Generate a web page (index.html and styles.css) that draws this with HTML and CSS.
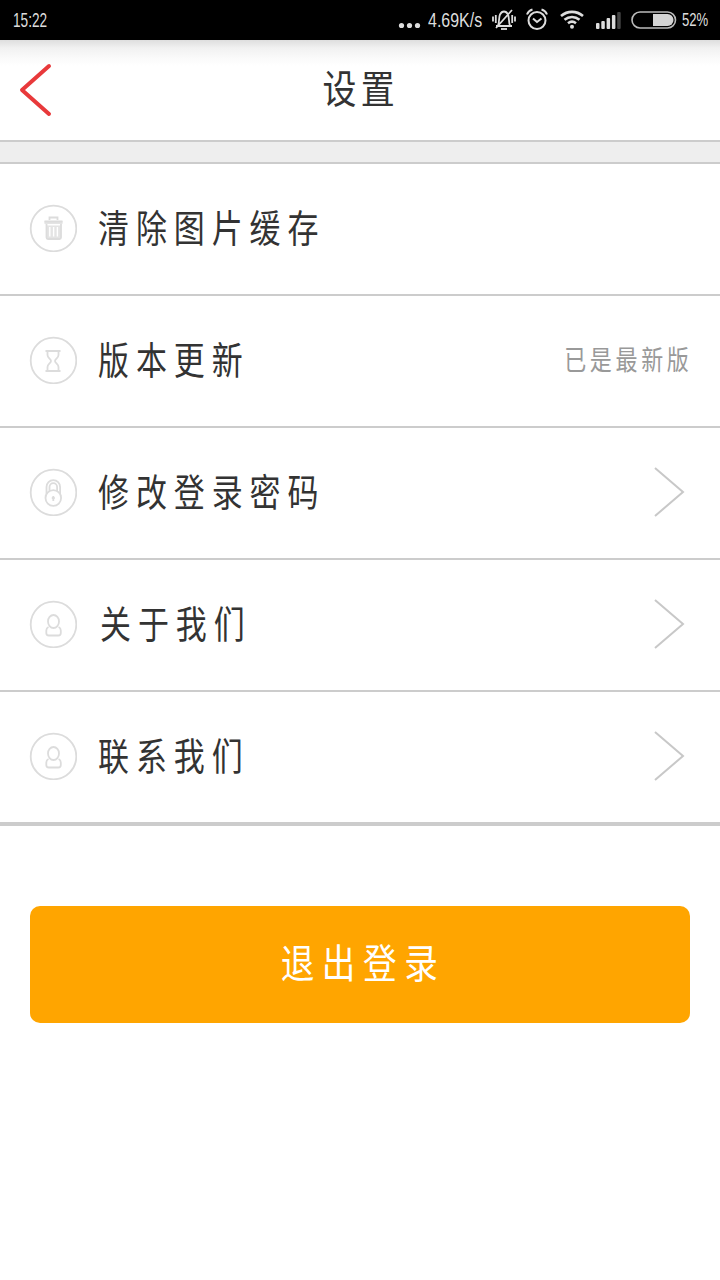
FILE: index.html
```html
<!DOCTYPE html>
<html lang="zh-CN">
<head>
    <meta charset="UTF-8">
    <meta name="viewport" content="width=device-width, initial-scale=1.0">
    <title>设置</title>
    <link rel="stylesheet" href="styles.css">
</head>
<body>
    <div class="statusbar">
        <span class="time"><span class="narrow">15:22</span></span>
        <svg class="dots" width="24" height="40" viewBox="0 0 24 40" fill="#ddd">
            <circle cx="3.5" cy="25.500" r="2.6"/><circle cx="11.5" cy="25.500" r="2.6"/><circle cx="19.5" cy="25.500" r="2.6"/>
        </svg>
        <span class="speed"><span class="narrow">4.69K/s</span></span>
        <svg class="mute" width="24" height="40" viewBox="0 0 24 40" fill="none" stroke="#ddd" stroke-width="1.8">
            <path d="M4 26h16M6 25.500c1.500-2 .5-8 2-11 2-4 6-4 8 0 1.500 3 .5 9 2 11M4 28L20 10M3.800 15v8M1 16.500v5M20.200 15v8M23 16.500v5"/>
            <path d="M9 29h6"/>
        </svg>
        <svg class="alarm" width="24" height="40" viewBox="0 0 24 40" fill="none" stroke="#ddd" stroke-width="2">
            <circle cx="12" cy="20.500" r="8.500"/>
            <path d="M8 18.500l4 3.500 4.500-3.500M2 14.500c1-2.500 3-4.300 5.500-5M22 14.500c-1-2.500-3-4.300-5.500-5"/>
        </svg>
        <svg class="wifi" width="24" height="40" viewBox="0 0 24 40" fill="none" stroke="#ddd" stroke-width="2.600">
            <path d="M1 16c6.500-5.500 15.500-5.500 22 0M4.500 19.800c4.500-3.800 10.500-3.800 15 0M8 23.300c2.500-2 5.500-2 8 0"/>
            <circle cx="12" cy="26.800" r="2" fill="#ddd" stroke="none"/>
        </svg>
        <svg class="signal" width="26" height="40" viewBox="0 0 26 40" fill="#ddd">
            <rect x="0" y="23" width="3.500" height="6" rx="1"/>
            <rect x="5.300" y="21" width="3.500" height="8" rx="1"/>
            <rect x="10.600" y="18" width="3.500" height="11" rx="1"/>
            <rect x="15.900" y="15" width="3.500" height="14" rx="1"/>
            <rect x="21.200" y="12" width="3.500" height="17" rx="1" fill="#444"/>
        </svg>
        <svg class="battery" width="46" height="40" viewBox="0 0 46 40">
            <rect x="1" y="12" width="43.500" height="16" rx="8" fill="none" stroke="#bbb" stroke-width="1.600"/>
            <path d="M22 14h14.500a6 6 0 0 1 0 12H22z" fill="#d4d4d4"/>
        </svg>
        <span class="percent"><span class="narrow">52%</span></span>
    </div>

    <div class="header">
        <svg class="back" width="34" height="54" viewBox="0 0 34 54" fill="none" stroke="#e8393b" stroke-width="4" stroke-linecap="round" stroke-linejoin="round">
            <path d="M30 3L3 27l27 24"/>
        </svg>
        <h1 class="title">设置</h1>
    </div>

    <div class="gap"></div>

    <ul class="list">
        <li class="row">
            <svg class="icon" width="48" height="48" viewBox="0 0 48 48">
                <circle cx="24.500" cy="24.500" r="22.800"/>
                <path class="solid" d="M15.500 17h18v3h-18zM17.500 21.500h14.500V35H17.500z"/>
                <path d="M15.500 17.500h18M20.500 16v-2.500h8V16M17.500 20v13.500q0 1.500 1.500 1.500h11.500q1.500 0 1.500-1.500V20"/>
                <path class="slots" d="M20.800 23v9.500M24.600 23v9.500M28.400 23v9.500"/>
            </svg>
            <span class="label">清除图片缓存</span>
        </li>
        <li class="row">
            <svg class="icon" width="48" height="48" viewBox="0 0 48 48">
                <circle cx="24.500" cy="24.500" r="22.800"/>
                <path d="M16.500 15h15M16.500 35h15M18.500 15v4c0 3 3.500 4 3.500 6s-3.500 3-3.500 6V35M29.500 15v4c0 3-3.500 4-3.500 6s3.500 3 3.500 6V35"/>
            </svg>
            <span class="label">版本更新</span>
            <span class="value">已是最新版</span>
        </li>
        <li class="row">
            <svg class="icon" width="48" height="48" viewBox="0 0 48 48">
                <circle cx="24.500" cy="24.500" r="22.800"/>
                <circle cx="24.300" cy="30" r="7.800"/>
                <path d="M17.500 26v-7a6.800 6.800 0 0 1 13.600 0v7M20.500 23v-4a3.800 3.800 0 0 1 7.600 0v4M24.300 28v5M22.800 30h3"/>
            </svg>
            <span class="label">修改登录密码</span>
            <svg class="arrow" width="32" height="52" viewBox="0 0 32 52"><path d="M2 2l28 24L2 50"/></svg>
        </li>
        <li class="row">
            <svg class="icon" width="48" height="48" viewBox="0 0 48 48">
                <circle cx="24.500" cy="24.500" r="22.800"/>
                <ellipse cx="24.500" cy="21.500" rx="5.500" ry="6.500"/>
                <path d="M19.500 27q-2.200 1-2.200 3.500V33q0 2.500 2.500 2.500h9.500q2.500 0 2.500-2.500v-2.500q0-2.500-2.200-3.500"/>
            </svg>
            <span class="label about">关于我们</span>
            <svg class="arrow" width="32" height="52" viewBox="0 0 32 52"><path d="M2 2l28 24L2 50"/></svg>
        </li>
        <li class="row">
            <svg class="icon" width="48" height="48" viewBox="0 0 48 48">
                <circle cx="24.500" cy="24.500" r="22.800"/>
                <ellipse cx="24.500" cy="21.500" rx="5.500" ry="6.500"/>
                <path d="M19.500 27q-2.200 1-2.200 3.500V33q0 2.500 2.500 2.500h9.500q2.500 0 2.500-2.500v-2.500q0-2.500-2.200-3.500"/>
            </svg>
            <span class="label">联系我们</span>
            <svg class="arrow" width="32" height="52" viewBox="0 0 32 52"><path d="M2 2l28 24L2 50"/></svg>
        </li>
    </ul>

    <button class="logout"><span class="logout-text">退出登录</span></button>
</body>
</html>
```

FILE: styles.css
```css
* {
    box-sizing: border-box;
}
body {
    margin: 0;
    background: #fff;
    color: #333;
    font-family: "Noto Sans CJK SC", sans-serif;
}
svg {
    display: block;
    flex: none;
}

/* status bar */
.statusbar {
    display: flex;
    align-items: center;
    height: 40px;
    padding-left: 13px;
    background: #000;
    color: #ddd;
    font-family: "Liberation Sans", sans-serif;
    font-size: 21px;
    line-height: 38px;
    white-space: nowrap;
}
.narrow {
    display: inline-block;
    transform: scaleX(0.65);
    transform-origin: left;
}
.time {
    width: 385px;
}
.speed {
    width: 54px;
    margin-left: 6px;
}
.speed .narrow {
    transform: scaleX(0.76);
}
.mute {
    margin-left: 10px;
}
.alarm {
    margin-left: 9px;
}
.wifi {
    margin-left: 11px;
}
.signal {
    margin-left: 12px;
}
.battery {
    margin-left: 9px;
}
.percent {
    width: 27px;
    margin-left: 5px;
    font-size: 19px;
}
.percent .narrow {
    transform: scaleX(0.69);
}

/* header */
.header {
    display: grid;
    grid-template-columns: 54px 1fr 54px;
    align-items: center;
    height: 102px;
    border-bottom: 2px solid #ccc;
    background: linear-gradient(#dedede 0, #f1f1f1 8px, #fafafa 18px, #fff 26px);
}
.back {
    margin-left: 19px;
}
.title {
    margin: 0;
    padding-bottom: 8px;
    font-size: 39px;
    font-weight: 400;
    line-height: 88px;
    letter-spacing: 5px;
    text-indent: 2px;
    text-align: center;
    transform: scaleX(0.87);
}
.gap {
    height: 20px;
    background: #eee;
}

/* settings list */
.list {
    margin: 0;
    padding: 0;
    list-style: none;
    border-top: 2px solid #ccc;
    border-bottom: 2px solid #ccc;
}
.row {
    display: flex;
    align-items: center;
    height: 132px;
    padding: 0 35px 2px 29px;
    border-bottom: 2px solid #ccc;
}
.icon {
    fill: none;
    stroke: #dcdcdc;
    stroke-width: 1.8;
}
.icon .solid {
    fill: #e4e4e4;
    stroke: none;
}
.icon .slots {
    stroke: #fff;
    stroke-width: 1.4;
}
.label {
    margin-left: 21px;
    padding-bottom: 5px;
    font-size: 38px;
    line-height: 56px;
    letter-spacing: 8.5px;
    white-space: nowrap;
    transform: scaleX(0.815);
    transform-origin: left;
}
.about {
    margin-left: 23px;
}
.value {
    margin-left: auto;
    margin-right: -7px;
    padding-bottom: 3px;
    color: #999;
    font-size: 27px;
    letter-spacing: 4.5px;
    white-space: nowrap;
    transform: scaleX(0.815);
    transform-origin: right;
}
.arrow {
    margin-left: auto;
    fill: none;
    stroke: #c8c8c8;
    stroke-width: 2;
}

.logout {
    display: block;
    width: 660px;
    height: 117px;
    margin: 80px auto 0;
    padding: 0 0 7px;
    border: none;
    border-radius: 10px;
    background: #ffa500;
    color: #fff;
    font-family: inherit;
    font-size: 40px;
    cursor: pointer;
}
.logout-text {
    display: inline-block;
    margin-right: -6px;
    letter-spacing: 9px;
    transform: scaleX(0.84);
}
```
